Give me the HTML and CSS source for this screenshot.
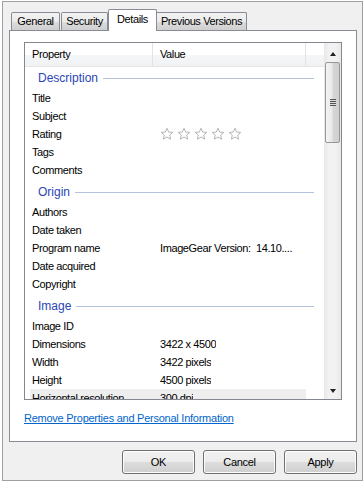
FILE: index.html
```html
<!DOCTYPE html>
<html lang="en">
<head>
<meta charset="UTF-8">
<title>Properties - Details</title>
<link rel="stylesheet" href="styles.css">
</head>
<body>

<div class="dialog">
  <!-- Tab strip -->
  <div class="tabs">
    <div class="tab tab-general">General</div>
    <div class="tab tab-security">Security</div>
    <div class="tab tab-details active">Details</div>
    <div class="tab tab-versions">Previous Versions</div>
  </div>

  <!-- Tab page -->
  <div class="panel">
    <div class="listbox">
      <div class="list-body">
        <div class="list-header">
          <div class="col col-prop">Property</div>
          <div class="col col-value">Value</div>
          <div class="col col-blank"></div>
        </div>

        <div class="group first"><span>Description</span></div>
        <div class="row"><span class="label">Title</span><span class="value"></span></div>
        <div class="row"><span class="label">Subject</span><span class="value"></span></div>
        <div class="row">
          <span class="label">Rating</span>
          <span class="value stars">
            <svg viewBox="0 0 14 14"><path d="M7 1.2 8.7 5.1 12.8 5.4 9.7 8.1 10.6 12.2 7 10 3.4 12.2 4.3 8.1 1.2 5.4 5.3 5.1Z"/></svg>
            <svg viewBox="0 0 14 14"><path d="M7 1.2 8.7 5.1 12.8 5.4 9.7 8.1 10.6 12.2 7 10 3.4 12.2 4.3 8.1 1.2 5.4 5.3 5.1Z"/></svg>
            <svg viewBox="0 0 14 14"><path d="M7 1.2 8.7 5.1 12.8 5.4 9.7 8.1 10.6 12.2 7 10 3.4 12.2 4.3 8.1 1.2 5.4 5.3 5.1Z"/></svg>
            <svg viewBox="0 0 14 14"><path d="M7 1.2 8.7 5.1 12.8 5.4 9.7 8.1 10.6 12.2 7 10 3.4 12.2 4.3 8.1 1.2 5.4 5.3 5.1Z"/></svg>
            <svg viewBox="0 0 14 14"><path d="M7 1.2 8.7 5.1 12.8 5.4 9.7 8.1 10.6 12.2 7 10 3.4 12.2 4.3 8.1 1.2 5.4 5.3 5.1Z"/></svg>
          </span>
        </div>
        <div class="row"><span class="label">Tags</span><span class="value"></span></div>
        <div class="row"><span class="label">Comments</span><span class="value"></span></div>

        <div class="group"><span>Origin</span></div>
        <div class="row"><span class="label">Authors</span><span class="value"></span></div>
        <div class="row"><span class="label">Date taken</span><span class="value"></span></div>
        <div class="row"><span class="label">Program name</span><span class="value">ImageGear Version:&nbsp; 14.10....</span></div>
        <div class="row"><span class="label">Date acquired</span><span class="value"></span></div>
        <div class="row"><span class="label">Copyright</span><span class="value"></span></div>

        <div class="group"><span>Image</span></div>
        <div class="row"><span class="label">Image ID</span><span class="value"></span></div>
        <div class="row"><span class="label">Dimensions</span><span class="value">3422 x 4500</span></div>
        <div class="row"><span class="label">Width</span><span class="value">3422 pixels</span></div>
        <div class="row"><span class="label">Height</span><span class="value">4500 pixels</span></div>
        <div class="row hover"><span class="label">Horizontal resolution</span><span class="value">300 dpi</span></div>
      </div>

      <!-- Vertical scrollbar -->
      <div class="scrollbar">
        <div class="arrow up"></div>
        <div class="thumb"><div class="grip"></div></div>
        <div class="arrow down"></div>
      </div>
    </div>

    <a class="remove-link" href="#">Remove Properties and Personal Information</a>
  </div>

  <!-- Dialog buttons -->
  <div class="buttons">
    <button class="btn">OK</button>
    <button class="btn">Cancel</button>
    <button class="btn">Apply</button>
  </div>
</div>

</body>
</html>
```

FILE: styles.css
```css
/* Dialog frame */
body {
  margin: 0;
  background: #fff;
  font-family: 'Liberation Sans', Arial, sans-serif;
  font-size: 11px;
  letter-spacing: -0.4px;
  color: #000;
}
.dialog {
  box-sizing: border-box;
  width: 361px;
  height: 480px;
  margin: 1px 0 0 2px;
  padding: 7px 5px 0 6px;
  background: #f0f0f0;
  border: 1px solid #a0a0a0;
}

/* Tabs */
.tabs {
  display: flex;
  align-items: flex-end;
  height: 22px;
  padding-left: 2px;
  position: relative;
  z-index: 1;
}
.tab {
  box-sizing: border-box;
  height: 18px;
  margin-bottom: 1px;
  margin-right: 1px;
  padding-top: 2px;
  text-align: center;
  white-space: nowrap;
  border: 1px solid #898c95;
  border-bottom: none;
  border-radius: 2px 2px 0 0;
  background: linear-gradient(#f2f2f2, #ebebeb 50%, #dddddd 51%, #cfcfcf);
}
.tab-general { width: 49px; }
.tab-security { width: 47px; }
.tab-details { width: 49px; }
.tab-versions { width: 91px; }
.tab.active {
  height: 22px;
  margin: 0 -1px 0 -1px;
  padding-top: 3px;
  background: #fff;
  position: relative;
}

/* Tab page */
.panel {
  box-sizing: border-box;
  height: 412px;
  margin-top: -1px;
  padding: 11px 0 0 14px;
  background: #fff;
  border: 1px solid #898c95;
}
.listbox {
  display: flex;
  width: 318px;
  height: 358px;
  box-sizing: border-box;
  border: 1px solid #828790;
  background: #fff;
}
.list-body {
  width: 299px;
  overflow: hidden;
}
.list-header {
  display: flex;
  height: 23px;
  border-bottom: 1px solid #e5e5e5;
  background: linear-gradient(#ffffff, #ffffff 50%, #f5f6f7 51%, #f1f2f4);
}
.col {
  box-sizing: border-box;
  padding: 5px 0 0 7px;
  border-right: 1px solid #e0e3e8;
}
.col-prop { width: 128px; }
.col-value { width: 153px; }
.col-blank { flex: 1; border-right: none; }

/* Groups and rows */
.group {
  display: flex;
  align-items: center;
  height: 24px;
  margin: 0 10px 0 13px;
  padding-top: 2px;
  box-sizing: border-box;
  color: #2b46b6;
  font-size: 12px;
  letter-spacing: 0;
}
.group.first {
  height: 22px;
  padding-top: 0;
}
.group::after {
  content: "";
  flex: 1;
  height: 1px;
  margin-left: 5px;
  background: #b4c2de;
}
.row {
  display: flex;
  align-items: center;
  height: 18px;
  width: 276px;
  margin-left: 5px;
}
.row.hover {
  background: #eeeeee;
}
.label {
  flex-shrink: 0;
  width: 128px;
  padding-left: 2px;
  white-space: nowrap;
  overflow: hidden;
}
.value {
  white-space: nowrap;
  overflow: hidden;
}
.stars {
  display: flex;
  gap: 3px;
}
.stars svg {
  width: 14px;
  height: 14px;
  fill: #fff;
  stroke: #b6b6b6;
  stroke-width: 1;
  stroke-linejoin: round;
}

/* Scrollbar */
.scrollbar {
  display: flex;
  flex-direction: column;
  align-items: center;
  width: 17px;
  background: linear-gradient(90deg, #e8e8e8, #f2f2f2 30%, #f2f2f2 70%, #e8e8e8);
}
.arrow {
  width: 0;
  height: 0;
  border-left: 3.5px solid transparent;
  border-right: 3.5px solid transparent;
}
.arrow.up {
  margin-top: 9px;
  border-bottom: 4px solid #222;
}
.arrow.down {
  margin-top: auto;
  margin-bottom: 6px;
  border-top: 4px solid #222;
}
.thumb {
  display: flex;
  align-items: center;
  justify-content: center;
  box-sizing: border-box;
  width: 15px;
  height: 81px;
  margin-top: 6px;
  border: 1px solid #979797;
  border-radius: 2px;
  background: linear-gradient(90deg, #f4f4f4, #e9e9e9 45%, #d6d6d6 55%, #cfcfcf);
}
.grip {
  width: 6px;
  height: 7px;
  background: repeating-linear-gradient(#555 0, #555 1px, #dadada 1px, #dadada 2px);
}

/* Link */
.remove-link {
  display: block;
  margin-top: 11px;
  color: #0066cc;
  font-size: 11px;
  letter-spacing: -0.25px;
  line-height: 14px;
}

/* Buttons */
.buttons {
  display: flex;
  justify-content: flex-end;
  gap: 8px;
  margin-top: 8px;
}
.btn {
  width: 73px;
  height: 24px;
  padding: 0;
  font-family: inherit;
  font-size: 11px;
  letter-spacing: -0.3px;
  color: #000;
  border: 1px solid #707070;
  border-radius: 3px;
  background: linear-gradient(#f2f2f2, #ebebeb 50%, #dddddd 51%, #cfcfcf);
  box-shadow: inset 0 0 0 1px #fcfcfc;
}
```
